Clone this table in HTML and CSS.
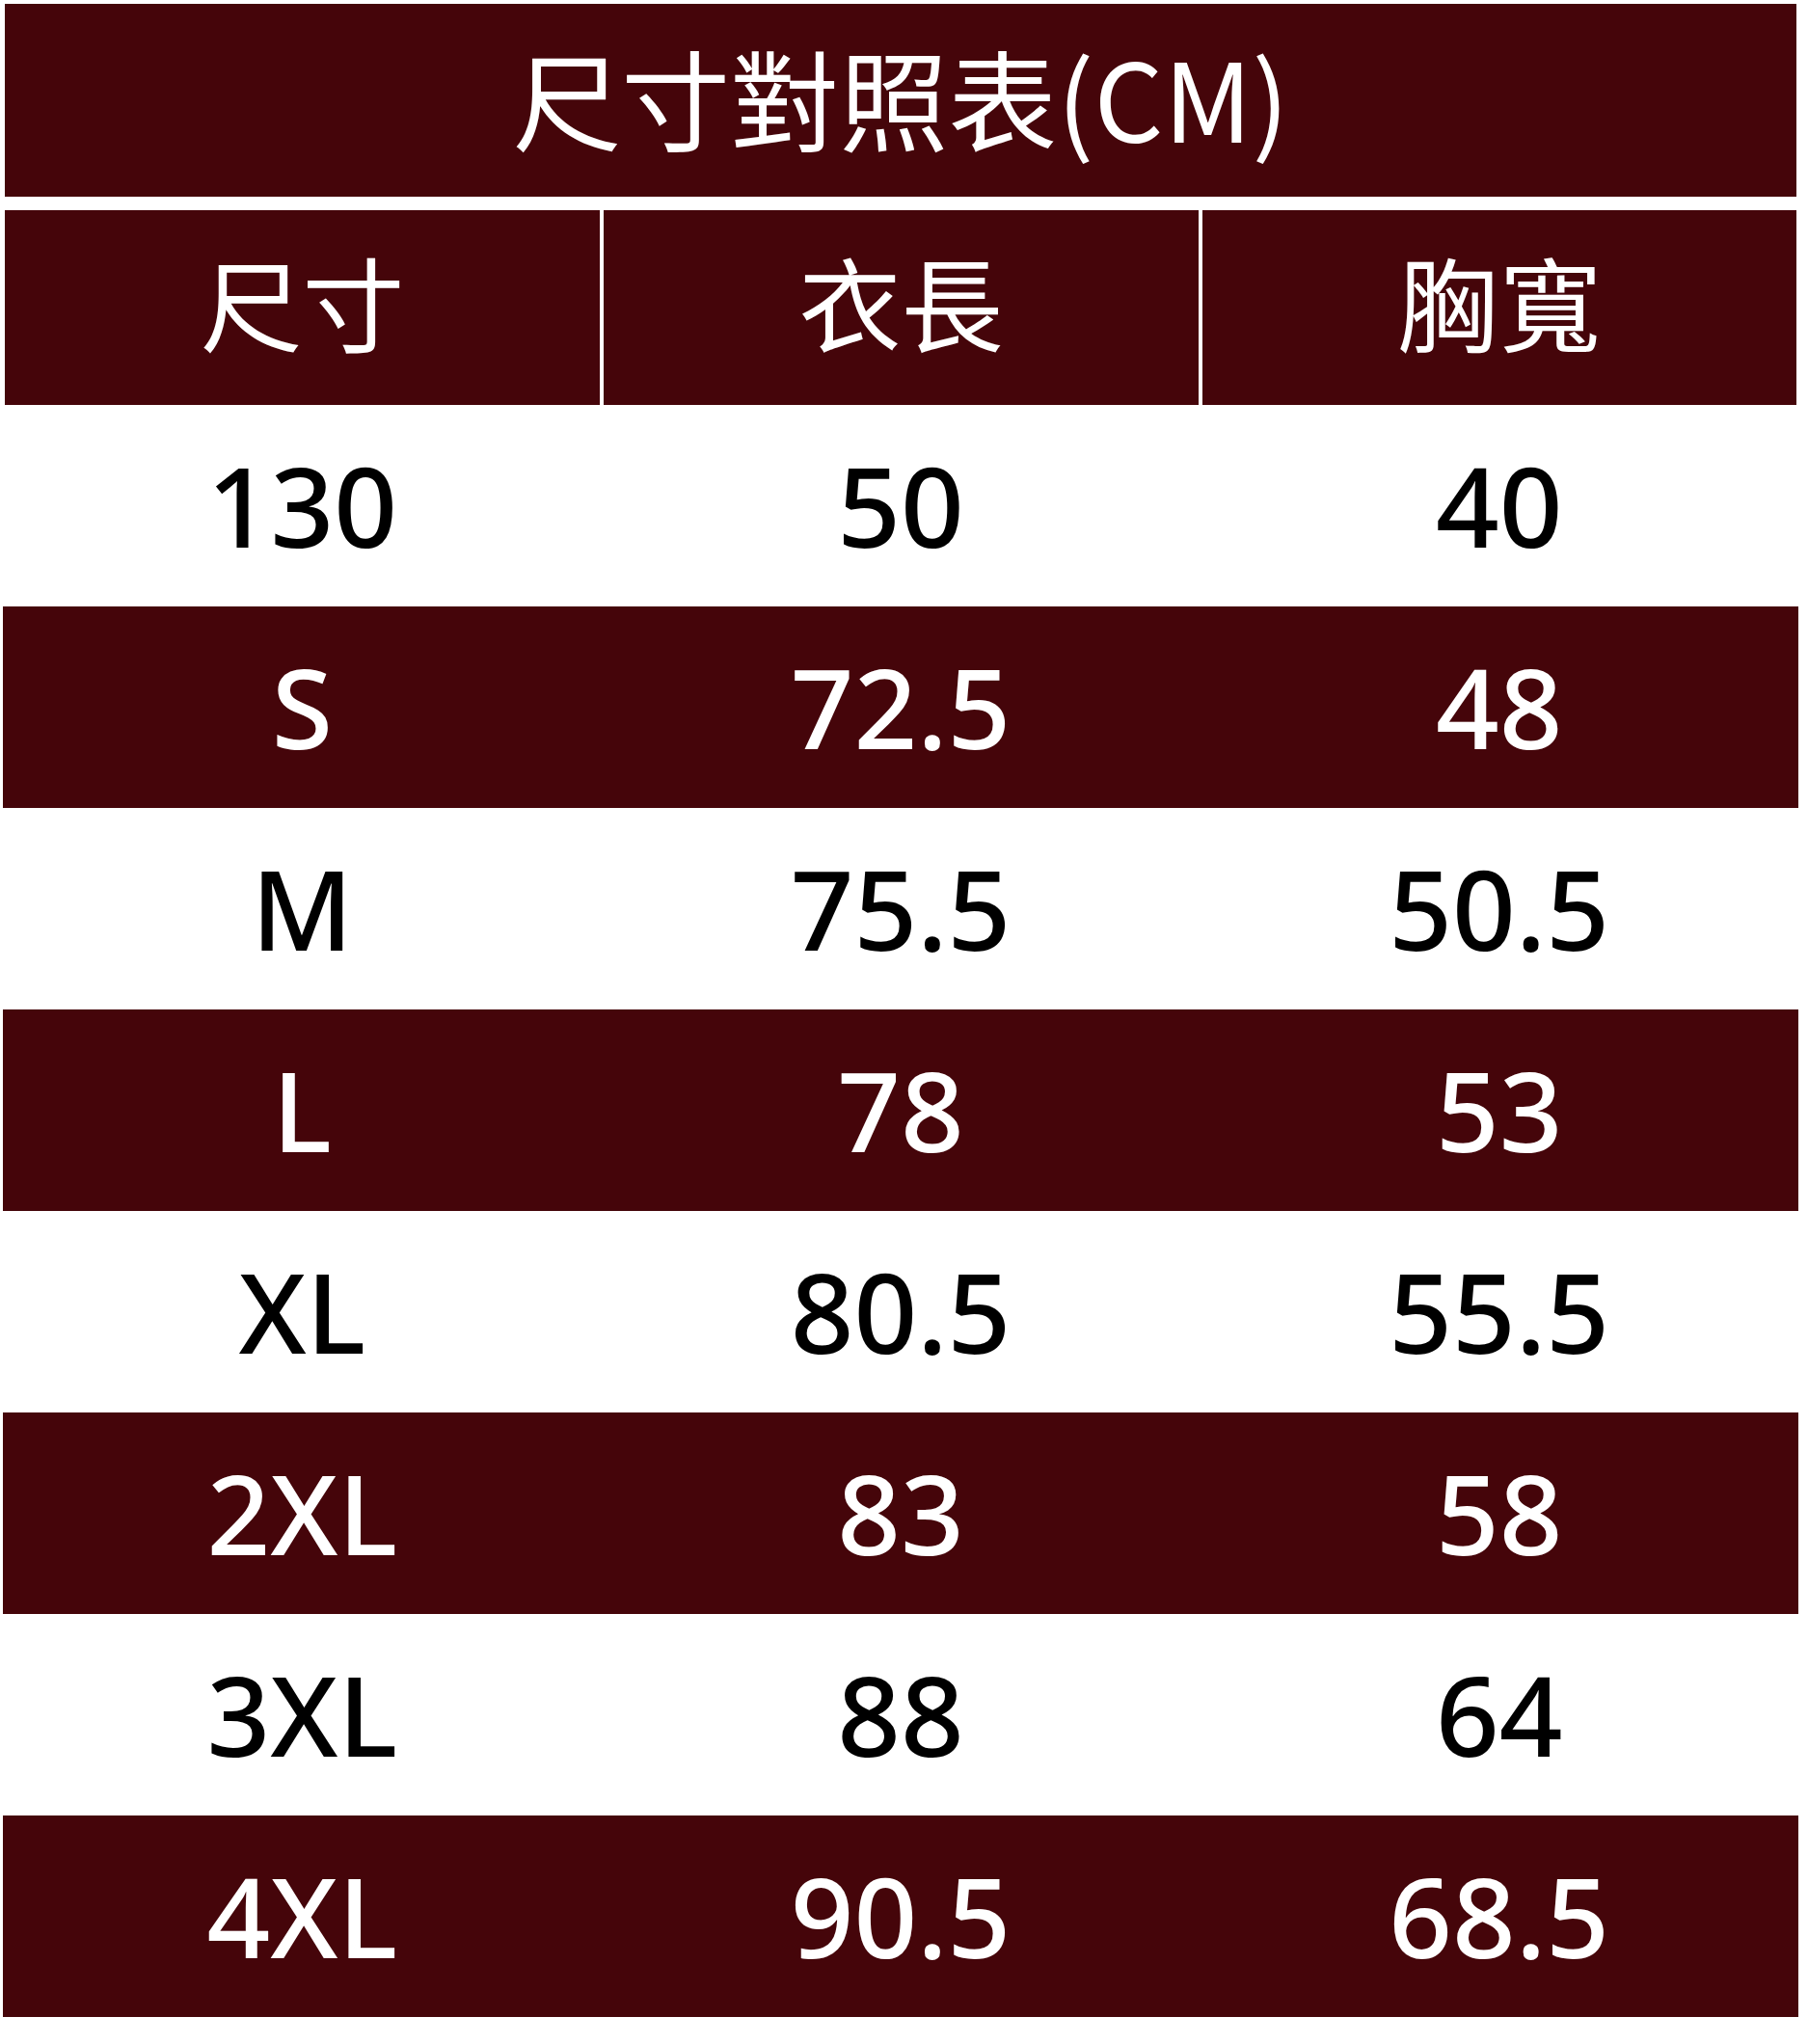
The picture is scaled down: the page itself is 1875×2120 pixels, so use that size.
FILE: index.html
```html
<!DOCTYPE html>
<html lang="zh-Hant">
<head>
<meta charset="utf-8">
<title>尺寸對照表</title>
<link rel="stylesheet" href="styles.css">
</head>
<body>
<div class="chart">
  <div class="title">尺寸對照表(CM)</div>
  <div class="header">
    <div class="hcell">尺寸</div>
    <div class="hcell">衣長</div>
    <div class="hcell">胸寬</div>
  </div>
  <div class="row light"><div>130</div><div>50</div><div>40</div></div>
  <div class="row dark"><div>S</div><div>72.5</div><div>48</div></div>
  <div class="row light"><div>M</div><div>75.5</div><div>50.5</div></div>
  <div class="row dark"><div>L</div><div>78</div><div>53</div></div>
  <div class="row light"><div>XL</div><div>80.5</div><div>55.5</div></div>
  <div class="row dark"><div>2XL</div><div>83</div><div>58</div></div>
  <div class="row light"><div>3XL</div><div>88</div><div>64</div></div>
  <div class="row dark"><div>4XL</div><div>90.5</div><div>68.5</div></div>
</div>
</body>
</html>
```
FILE: styles.css
```css
html, body {
  margin: 0;
  padding: 0;
  background: #ffffff;
}

.chart {
  width: 1862px;
  margin-left: 3px;
  padding-top: 4px;
  font-family: "Noto Sans", "Noto Sans CJK TC", sans-serif;
}

.title {
  margin: 0 2px;
  height: 200px;
  background: #45050a;
  color: #ffffff;
  font-family: "Noto Sans CJK TC", sans-serif;
  font-size: 113px;
  line-height: 190px;
  text-align: center;
}

.header {
  margin: 14px 2px 0;
  height: 202px;
  display: grid;
  grid-template-columns: 617px 617px 616px;
  column-gap: 4px;
}

.hcell {
  background: #45050a;
  color: #ffffff;
  font-family: "Noto Sans CJK TC", sans-serif;
  font-size: 106px;
  display: flex;
  align-items: center;
  justify-content: center;
  line-height: 1;
  padding-bottom: 16px;
}

.row {
  height: 209px;
  display: grid;
  grid-template-columns: 1fr 1fr 1fr;
  align-items: center;
  text-align: center;
  font-size: 115px;
  font-weight: 500;
  line-height: 1;
}

.row > div {
  padding-bottom: 2px;
}

.row.light {
  background: #ffffff;
  color: #000000;
}

.row.dark {
  background: #45050a;
  color: #ffffff;
}
```
